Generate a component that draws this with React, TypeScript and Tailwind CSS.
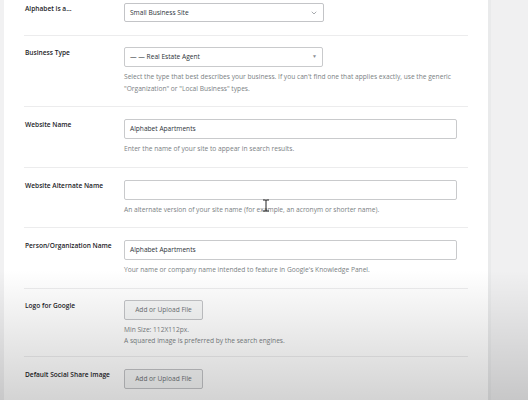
import { ChevronDown } from "lucide-react";

const font = { fontFamily: '"Open Sans", "Noto Sans", sans-serif' };

function Row({ label, children, pt = "pt-[12px]", pb = "pb-[12px]" }: { label: string; children: React.ReactNode; pt?: string; pb?: string }) {
  return (
    <div className={`flex border-b border-[#ececed] pl-px ${pt} ${pb}`}>
      <div className="w-[99px] shrink-0 pt-[1px] text-[6.6px] font-semibold leading-[10px] text-[#1d2327]">{label}</div>
      <div className="flex-1">{children}</div>
    </div>
  );
}

function Help({ children }: { children: React.ReactNode }) {
  return <p className="mt-[4px] text-[6.65px] leading-[12px] text-[#7b7f84]">{children}</p>;
}

function TextInput({ value }: { value?: string }) {
  return (
    <div className="flex h-[20px] w-[333px] items-center rounded-[2px] border border-[#c9cacc] bg-white px-[5px] text-[6.6px] text-[#2c3338]">
      {value}
    </div>
  );
}

function UploadButton() {
  return (
    <div className="flex h-[20px] w-[79px] items-center justify-center rounded-[2px] border border-[#c3c4c7] bg-[#f6f7f7] text-[6.6px] text-[#6b7075]">
      Add or Upload File
    </div>
  );
}

export default function App() {
  return (
    <div className="relative flex h-[400px] w-[528px] overflow-hidden bg-[#f0f0f1]" style={font}>
      <div className="w-[4px] shrink-0 bg-[#f1f1f2]" />
      <div className="w-[484px] shrink-0 bg-white">
        <div className="mx-[20px]">
          <Row label="Alphabet is a..." pt="pt-[3px]" pb="pb-[13px]">
            <div className="flex h-[19px] w-[200px] items-center justify-between rounded-[2px] border border-[#c3c4c7] bg-white pl-[5px] pr-[5px] text-[6.6px] text-[#2c3338]">
              <span>Small Business Site</span>
              <ChevronDown size={8} strokeWidth={1.5} className="text-[#50575e]" />
            </div>
          </Row>
          <Row label="Business Type" pt="pt-[11px]" pb="pb-[11px]">
            <div className="flex h-[20px] w-[199px] items-center justify-between rounded-[2px] border border-[#c9cacc] bg-white pl-[5px] pr-[5px] text-[6.6px] text-[#2c3338]">
              <span>— — Real Estate Agent</span>
              <span className="text-[5px] text-[#8c8f94]">▼</span>
            </div>
            <Help>
              Select the type that best describes your business. If you can't find one that applies exactly, use the generic
              <br />
              "Organization" or "Local Business" types.
            </Help>
          </Row>
          <Row label="Website Name">
            <TextInput value="Alphabet Apartments" />
            <Help>Enter the name of your site to appear in search results.</Help>
          </Row>
          <Row label="Website Alternate Name" pb="pb-[11px]">
            <TextInput />
            <Help>An alternate version of your site name (for example, an acronym or shorter name).</Help>
          </Row>
          <Row label="Person/Organization Name">
            <TextInput value="Alphabet Apartments" />
            <Help>Your name or company name intended to feature in Google's Knowledge Panel.</Help>
          </Row>
          <Row label="Logo for Google" pt="pt-[11px]" pb="pb-[10px]">
            <UploadButton />
            <p className="mt-[4px] text-[6.65px] leading-[11px] text-[#7b7f84]">
              Min Size: 112X112px.
              <br />
              A squared image is preferred by the search engines.
            </p>
          </Row>
          <Row label="Default Social Share Image">
            <UploadButton />
          </Row>
        </div>
      </div>
      <div className="w-[3px] shrink-0 bg-[#e9eaeb]" />
      <div className="flex-1 bg-[#f0f0f1]" />

      <svg className="pointer-events-none absolute left-[262px] top-[199px]" width="8" height="13" viewBox="0 0 8 13">
        <path d="M1 1h2.2q.8 0 .8.8v9.4q0 .8.8.8H7M1 12h2.2q.8 0 .8-.8M4 1.8q0-.8.8-.8H7" fill="none" stroke="#222" strokeWidth="1" />
      </svg>

      <div className="pointer-events-none absolute inset-x-0 bottom-0 h-[130px] bg-gradient-to-b from-transparent to-black/[0.17]" />
    </div>
  );
}
